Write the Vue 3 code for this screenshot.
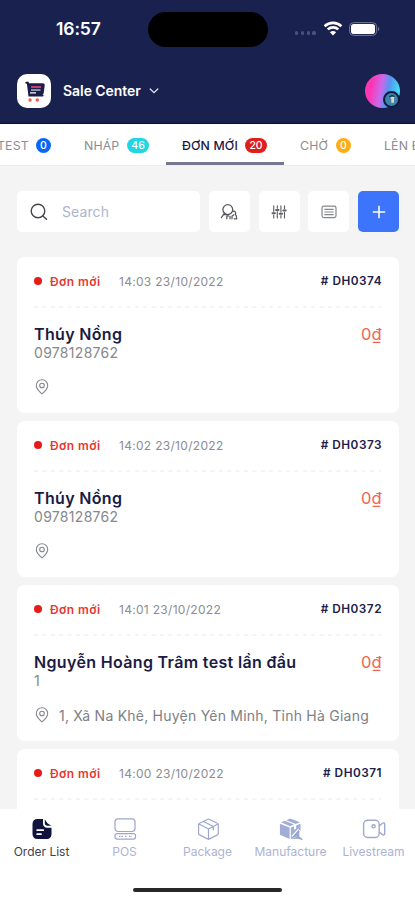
<script setup>
const tabs = [
  { key: 'test', label: 'TEST', count: 0, color: '#0b66f5' },
  { key: 'draft', label: 'NHÁP', count: 46, color: '#1fd6e3' },
  { key: 'new', label: 'ĐƠN MỚI', count: 20, color: '#de1f1c', active: true },
  { key: 'wait', label: 'CHỜ', count: 0, color: '#ffad14' },
  { key: 'up', label: 'LÊN Đ' },
]
const orders = [
  { id: 'DH0374', time: '14:03 23/10/2022', name: 'Thúy Nồng', phone: '0978128762', address: '' },
  { id: 'DH0373', time: '14:02 23/10/2022', name: 'Thúy Nồng', phone: '0978128762', address: '' },
  { id: 'DH0372', time: '14:01 23/10/2022', name: 'Nguyễn Hoàng Trâm test lần đầu', phone: '1', address: '1, Xã Na Khê, Huyện Yên Minh, Tỉnh Hà Giang' },
  { id: 'DH0371', time: '14:00 23/10/2022' },
]
</script>

<template>
  <div class="screen">
    <header class="header">
      <div class="status">
        <span class="clock">16:57</span>
        <span class="island"></span>
        <div class="signals">
          <span class="dots"><i></i><i></i><i></i><i></i></span>
          <svg class="wifi" width="20" height="15" viewBox="0 0 20 15">
            <path d="M1.6 5.2C6.4.8 13.6.8 18.4 5.2M4.7 8.4c3-2.7 7.6-2.7 10.6 0" fill="none" stroke="#fff" stroke-width="2.6" />
            <path d="M10 14.5 6.9 11.2c1.8-1.5 4.4-1.5 6.2 0z" fill="#fff" />
          </svg>
          <svg width="31" height="14" viewBox="0 0 31 14">
            <rect x=".6" y=".6" width="27" height="12.8" rx="4" fill="none" stroke="#737998" stroke-width="1" />
            <rect x="2" y="2" width="24" height="10" rx="2.8" fill="#fff" />
            <path d="M29 4.8c1.7.7 1.7 3.7 0 4.4z" fill="#737998" />
          </svg>
        </div>
      </div>
      <div class="shop">
        <span class="logo">
          <svg width="34" height="34" viewBox="0 0 34 34">
            <path d="M9.3 8.8h1.5l1.6 12.6h13.2" fill="none" stroke="#1b1d4d" stroke-width="2" stroke-linecap="round" />
            <path d="M10.8 9.2h15c1.3 0 2.1.9 1.9 2.2l-1 7.6c-.2 1.3-1 2-2.3 2H12.3z" fill="#1b1d4d" />
            <path d="M14 13h10.2" stroke="#e0486a" stroke-width="1.7" />
            <path d="M14 16h9.5M13 18.8h6" stroke="#fff" stroke-width="1.2" />
            <circle cx="13" cy="26" r="1.7" fill="#f4573d" />
            <circle cx="20.3" cy="26" r="1.7" fill="#f4573d" />
          </svg>
        </span>
        <span class="shop-name">Sale Center</span>
        <svg class="chevron" width="10" height="6" viewBox="0 0 10 6"><path d="m1.2 1 3.8 3.7L8.8 1" fill="none" stroke="#e5e7f2" stroke-width="1.2" stroke-linecap="round" /></svg>
        <span class="avatar">
          <span class="avatar-badge">
            <svg width="12" height="12" viewBox="0 0 12 12"><path d="m4 4.5 4.8-1-.8 2v4.3H5.3V6z" fill="#d3dbb8" /><path d="M3.3 4 6 2.5l2.7 1" stroke="#17243f" stroke-width="1.2" fill="none" /></svg>
          </span>
        </span>
      </div>
    </header>

    <nav class="tabs">
      <div v-for="t in tabs" :key="t.key" class="tab" :class="[t.key, { active: t.active }]">
        <span class="tab-label">{{ t.label }}</span>
        <span v-if="t.color" class="count" :style="{ background: t.color }">{{ t.count }}</span>
      </div>
    </nav>

    <main class="content">
      <div class="toolbar">
        <div class="search">
          <svg width="20" height="20" viewBox="0 0 20 20"><g fill="none" stroke="#46474c" stroke-width="1.4" stroke-linecap="round"><circle cx="9" cy="9" r="6.8" /><path d="m13.9 13.9 3.6 3.4" /></g></svg>
          <span>Search</span>
        </div>
        <button class="tool">
          <svg width="20" height="20" viewBox="0 0 20 20" fill="none" stroke="#55575d" stroke-width="1.25" stroke-linecap="round" stroke-linejoin="round">
            <circle cx="8.8" cy="7.6" r="4.9" />
            <path d="M5.4 11.3 2.4 15.6M4.2 12.8c1.4-.6 2.4.2 3.2-.2" />
            <path d="M13.8 9.3c2.6-.6 3.5 1.4 2.4 3 1.1.7 1.5 2 1.5 4.5h-2.4M7.8 16.8v-2.9h1.8M11 16.8v-2.4M13 16.8v-2.6l1.8-1.4" />
          </svg>
        </button>
        <button class="tool">
          <svg width="18" height="18" viewBox="0 0 18 18" fill="none" stroke="#606268" stroke-width="1.15" stroke-linecap="round">
            <path d="M3.7 2.9v5.7M3.7 12v3M7.3 2.9v2.3M7.3 8.5V15M10.9 2.9v6.2M10.9 12.5V15M14.5 2.9v3M14.5 9.2V15" />
            <path d="M2.5 10.3h2.4M6.1 6.9h2.4M9.7 10.8h2.4M13.3 7.6h2.4" stroke-width="2" />
          </svg>
        </button>
        <button class="tool">
          <svg width="18" height="16" viewBox="0 0 18 16" fill="none" stroke="#85878c" stroke-width="1.2" stroke-linecap="round">
            <rect x="2" y="2.2" width="14" height="11.4" rx="1.8" /><path d="M4.8 5.3h8.4M4.8 8h8.4M4.8 10.7h8.4" />
          </svg>
        </button>
        <button class="tool add">
          <svg width="14" height="14" viewBox="0 0 14 14"><path d="M7 .8v12.4M.8 7h12.4" stroke="#fff" stroke-width="1.6" /></svg>
        </button>
      </div>

      <article v-for="o in orders" :key="o.id" class="card">
        <div class="card-head">
          <i class="dot"></i>
          <span class="state">Đơn mới</span>
          <span class="time">{{ o.time }}</span>
          <span class="code"># {{ o.id }}</span>
        </div>
        <svg class="dash" width="347" height="2" viewBox="0 0 347 2"><path d="M0 1h347" stroke="#e8e9eb" stroke-width="1" stroke-dasharray="4 4.4" /></svg>
        <template v-if="o.name">
          <div class="customer">
            <span class="name">{{ o.name }}</span>
            <span class="price">0₫</span>
          </div>
          <div class="phone">{{ o.phone }}</div>
          <div class="address">
            <svg width="14" height="16" viewBox="0 0 14 16" fill="none" stroke="#85888d" stroke-width="1.1"><path d="M7 14.8C3.6 12 1.3 9.2 1.3 6.4a5.7 5.6 0 0 1 11.4 0C12.7 9.2 10.4 12 7 14.8z" /><circle cx="7" cy="6.5" r="2.3" /></svg>
            <span>{{ o.address }}</span>
          </div>
        </template>
      </article>
    </main>

    <footer class="bottom">
      <div class="nav">
        <div class="nav-item current">
          <svg width="24" height="24" viewBox="0 0 24 24"><path d="M7.5 2H13v4.5c0 2.5 1.7 4.3 4.2 4.3h4.3V17c0 3-1.9 5-5 5h-9c-3.1 0-5-2-5-5V7c0-3.1 1.9-5 5-5z" fill="#11133f" /><path d="M14.8 2.3c1.3 2.8 3.8 5.4 6.5 6.4h-3.7c-1.8 0-2.8-1-2.8-2.7z" fill="#11133f" /><path d="M7.2 13.2h6M7.2 17.2H11" stroke="#fff" stroke-width="1.8" stroke-linecap="round" /></svg>
          <span>Order List</span>
        </div>
        <div class="nav-item pos">
          <svg width="24" height="24" viewBox="0 0 24 24" fill="none" stroke="#9da5cf" stroke-width="1.2"><rect x="2" y="1.8" width="20" height="12.7" rx="3" /><rect x="2" y="16.6" width="20.5" height="5.5" rx="2" /><path d="M6 19.3h4M12 19.3h2M16 19.3h3" stroke-dasharray="1.5 1" /></svg>
          <span>POS</span>
        </div>
        <div class="nav-item package">
          <svg width="24" height="24" viewBox="0 0 24 24" fill="none" stroke="#a0a8d0" stroke-width="1.2" stroke-linejoin="round"><path d="m12.5 2 8.9 4.3c.6.3.9.8.9 1.4v8.8c0 .6-.3 1.1-.9 1.4l-8.9 4.5-9-4.5c-.6-.3-.9-.8-.9-1.4V7.7c0-.6.3-1.1.9-1.4zM3 7l9.5 5L22 7M12.5 12v10.4M7.5 4.5l9.8 5v4" /></svg>
          <span>Package</span>
        </div>
        <div class="nav-item manufacture">
          <svg width="28" height="26" viewBox="0 0 28 26">
            <path d="m2 7.3 10.5 4.2v12.2L2 19.2zM3.2 5.8l4-1.7 10 4.1-4.2 1.9zM8.9 3.4l4.2-1.8 10.6 4.2-4.6 1.8zM13.8 11.5l3.4-1.4v3.6l2.4-1.1V9.1l4.7-1.9v7.4l-6.6 7.3-3.9 1.8z" fill="#a1add2" />
            <path d="m15.5 21.5 7.3-7.8M16.8 22.3c2.8.4 4.2-.8 5.2-3l4 5" fill="none" stroke="#fff" stroke-width="3" />
            <path d="m16.3 21.5 5.8-6.3.3 4.3zM15.8 22.9c2.2.4 4.3-.1 6-2l4 3.5" fill="#a1add2" stroke="#94a1cb" stroke-width="1.3" stroke-linecap="round" />
          </svg>
          <span>Manufacture</span>
        </div>
        <div class="nav-item livestream">
          <svg width="26" height="24" viewBox="0 0 26 24" fill="none" stroke="#a0a8d0" stroke-width="1.4" stroke-linejoin="round"><rect x="2.6" y="3.2" width="15.6" height="17.3" rx="4" /><circle cx="12.6" cy="9.3" r="1.6" /><path d="m18.2 9 3.3-2.8c1-.7 2.2-.3 2.2 1v9.4c0 1.3-1.2 1.7-2.2 1l-3.3-2.6" /></svg>
          <span>Livestream</span>
        </div>
      </div>
      <div class="home"></div>
    </footer>
  </div>
</template>

<style>
body { margin: 0; overflow: hidden; }
</style>

<style scoped>
.screen { width: 415px; height: 900px; display: flex; flex-direction: column; overflow: hidden; background: #f4f4f4; font-family: Inter, "Noto Sans", sans-serif; }
.header { height: 124px; flex: none; box-sizing: border-box; background: #19224f; border-bottom: 1px solid #0b1033; }
.status { display: grid; grid-template-columns: 148px 120px 147px; align-items: center; height: 58px; }
.clock { padding-left: 56px; color: #fff; font-size: 17.5px; font-weight: 600; line-height: 58px; letter-spacing: -.1px; }
.island { height: 35px; border-radius: 18px; background: #000; }
.signals { display: flex; align-items: center; padding-left: 27px; padding-bottom: 1px; }
.dots { display: flex; gap: 2.6px; width: 28px; padding-top: 9px; }
.dots i { width: 3.2px; height: 3.2px; border-radius: 50%; background: #4c5379; }
.wifi { margin-right: 6px; }
.shop { display: flex; align-items: center; height: 65px; padding: 0 16px; box-sizing: border-box; }
.logo { width: 34px; height: 34px; margin-left: 1px; border-radius: 10px; background: #fff; }
.shop-name { margin-left: 12px; color: #fff; font-size: 14px; font-weight: 600; letter-spacing: -.06px; }
.chevron { margin-left: 8px; }
.avatar { display: flex; align-items: flex-end; justify-content: flex-end; margin-left: auto; margin-right: -1px; width: 35px; height: 34px; border-radius: 50%; background: linear-gradient(100deg, #ff35b4 20%, #c76bea 46%, #5695f0 64%, #3fe0f3 92%); }
.avatar-badge { display: flex; align-items: center; justify-content: center; width: 13px; height: 13px; border: 2.5px solid #101b3c; border-radius: 50%; background: #3e83ae; }
.tabs { height: 42px; flex: none; display: flex; overflow: hidden; background: #fff; border-bottom: 1px solid #eee; box-sizing: border-box; }
.tab { flex: none; display: flex; align-items: center; justify-content: space-between; padding: 2px 17px 0 16px; box-sizing: border-box; color: #8b8d92; font-size: 12.3px; letter-spacing: .15px; }
.tab-label { white-space: nowrap; }
.test { width: 87px; margin-left: -19px; }
.draft { width: 98px; }
.new { width: 118px; }
.wait { width: 84px; }
.up { width: 120px; }
.tab.active { padding-bottom: 0; border-bottom: 3px solid #74778e; padding-top: 5px; color: #191943; font-weight: 500; letter-spacing: .15px; }
.count { display: flex; align-items: center; justify-content: center; min-width: 15px; height: 15px; border-radius: 8px; box-sizing: border-box; padding: 0 3.5px; color: #fff; font-size: 10.5px; font-weight: 500; letter-spacing: 0; }
.draft .count, .new .count { width: 22px; }
.content { flex: 1; min-height: 0; overflow: hidden; padding: 25px 16px 0 17px; display: flex; flex-direction: column; gap: 8px; }
.toolbar { flex: none; display: grid; grid-template-columns: 183px 41px 41px 41px 41px; justify-content: space-between; height: 41px; margin-bottom: 17px; }
.search { display: flex; align-items: center; gap: 13px; padding-left: 12px; border-radius: 5px; background: #fff; color: #aeb4ce; font-size: 14px; letter-spacing: .1px; }
.tool { display: flex; align-items: center; justify-content: center; padding: 0; border: 0; border-radius: 5px; background: #fff; }
.add { background: #3d74fc; }
.card { flex: none; display: flex; flex-direction: column; height: 156px; padding: 0 17px; box-sizing: border-box; border-radius: 8px; background: #fff; }
.card-head { display: flex; align-items: center; height: 49px; font-size: 12px; box-sizing: border-box; padding-bottom: 1px; }
.dot { width: 8px; height: 8px; border-radius: 50%; background: #e51c18; }
.state { width: 69px; margin-left: 8px; color: #e9362f; font-weight: 600; letter-spacing: .45px; }
.time { color: #8b8d92; letter-spacing: .3px; }
.code { margin-left: auto; color: #20204b; font-weight: 600; font-size: 11.8px; letter-spacing: .5px; white-space: nowrap; }
.dash { display: block; }
.customer { display: flex; align-items: center; justify-content: space-between; height: 20px; margin-top: 16px; }
.name { color: #1b1b43; font-size: 16px; font-weight: 600; line-height: 20px; letter-spacing: .34px; white-space: nowrap; }
.price { color: #f36351; font-size: 16.5px; letter-spacing: .3px; }
.phone { height: 17px; color: #86888d; font-size: 14px; line-height: 17px; letter-spacing: .3px; }
.address { display: flex; align-items: center; gap: 10px; height: 18px; margin-top: 17px; padding-left: 1px; color: #7d8085; font-size: 14px; letter-spacing: .23px; white-space: nowrap; }
.bottom { flex: none; height: 91px; background: #fff; }
.nav { display: grid; grid-template-columns: repeat(5, 83px); height: 50px; }
.nav-item { display: flex; flex-direction: column; align-items: center; padding-top: 8px; box-sizing: border-box; color: #adb3d2; font-size: 12px; line-height: 15px; }
.nav-item svg { flex: none; height: 24px; }
.nav-item span { margin-top: 3px; white-space: nowrap; }
.current { color: #404250; }
.home { width: 149px; height: 4px; margin: 29px auto 0; border-radius: 2px; background: #28272a; }
</style>
